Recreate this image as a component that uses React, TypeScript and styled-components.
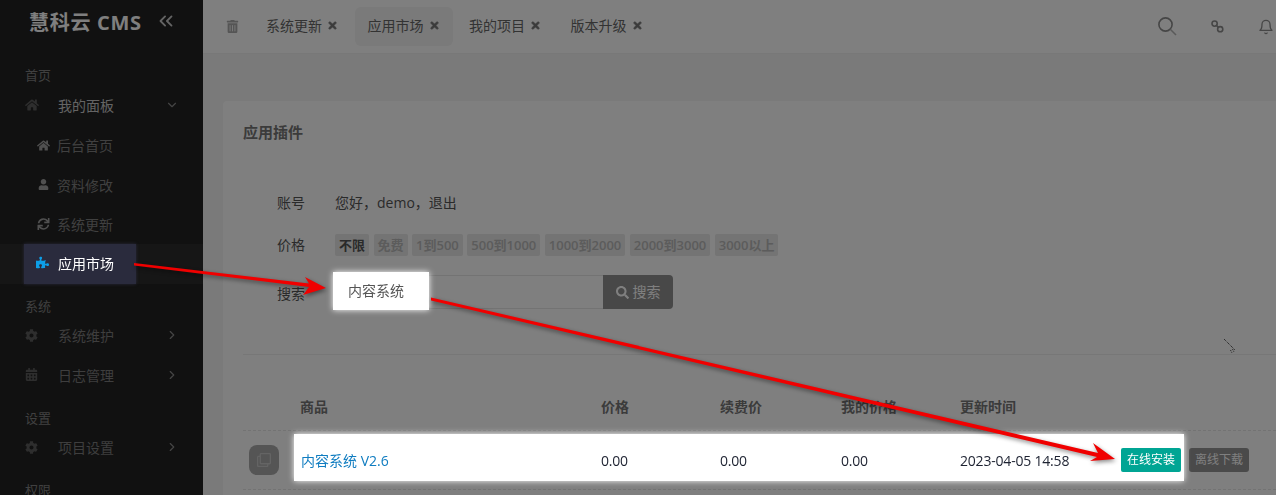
import React, { FC } from 'react';
import styled, { createGlobalStyle } from 'styled-components';
import { FaHome, FaUser, FaSync, FaPuzzlePiece, FaCog, FaCalendarAlt, FaTimes, FaTrashAlt, FaSearch, FaRegClone } from 'react-icons/fa';
import { FiChevronDown, FiChevronRight, FiChevronsLeft, FiBell } from 'react-icons/fi';

const tabs = [
  { name: '系统更新' },
  { name: '应用市场', active: true },
  { name: '我的项目' },
  { name: '版本升级' },
];

const prices = ['不限', '免费', '1到500', '500到1000', '1000到2000', '2000到3000', '3000以上'];

const App: FC = () => (
  <Page>
    <GlobalStyle />
    <Sidebar>
      <Logo>
        <LogoText>慧科云 CMS</LogoText>
        <FiChevronsLeft size={22} />
      </Logo>
      <GroupLabel $first>首页</GroupLabel>
      <MenuItem $open>
        <MenuIcon><FaHome size={14} /></MenuIcon>
        <span>我的面板</span>
        <Caret><FiChevronDown size={14} /></Caret>
      </MenuItem>
      <SubItem>
        <FaHome size={13} />
        <span>后台首页</span>
      </SubItem>
      <SubItem>
        <FaUser size={11} />
        <span>资料修改</span>
      </SubItem>
      <SubItem>
        <FaSync size={12} />
        <span>系统更新</span>
      </SubItem>
      <ActiveRow>
        <ActiveSpot>
          <FaPuzzlePiece size={13} color="#0d9fe8" />
          <span>应用市场</span>
        </ActiveSpot>
      </ActiveRow>
      <GroupLabel>系统</GroupLabel>
      <MenuItem>
        <MenuIcon><FaCog size={13} /></MenuIcon>
        <span>系统维护</span>
        <Caret><FiChevronRight size={14} /></Caret>
      </MenuItem>
      <MenuItem>
        <MenuIcon><FaCalendarAlt size={13} /></MenuIcon>
        <span>日志管理</span>
        <Caret><FiChevronRight size={14} /></Caret>
      </MenuItem>
      <GroupLabel>设置</GroupLabel>
      <MenuItem>
        <MenuIcon><FaCog size={13} /></MenuIcon>
        <span>项目设置</span>
        <Caret><FiChevronRight size={14} /></Caret>
      </MenuItem>
      <GroupLabel>权限</GroupLabel>
    </Sidebar>
    <Main>
      <Header>
        <Trash><FaTrashAlt size={13} /></Trash>
        <Tabs>
          {tabs.map((tab) => (
            <Tab key={tab.name} $active={tab.active}>
              {tab.name}
              <FaTimes size={11} />
            </Tab>
          ))}
        </Tabs>
        <Tools>
          <svg width="19" height="19" viewBox="0 0 19 19" fill="none" strokeWidth="1.6">
            <circle cx="7.5" cy="7.5" r="6.6" stroke="#8c8c8c" />
            <path d="M12.5 12.5l5.5 5.5" stroke="#b4b4b4" />
          </svg>
          <svg width="13" height="13" viewBox="0 0 13 13" fill="none" stroke="#8c8c8c" strokeWidth="1.6">
            <circle cx="3.6" cy="3.6" r="2.6" />
            <circle cx="9.2" cy="9.2" r="2.6" />
            <path d="M5.4 5.4l2 2" />
          </svg>
          <FiBell size={16} color="#8c8c8c" />
        </Tools>
      </Header>
      <Content>
        <Card>
          <CardTitle>应用插件</CardTitle>
          <FormRow $top={51}>
            <FormLabel>账号</FormLabel>
            <span>您好，demo，退出</span>
          </FormRow>
          <FormRow $top={21}>
            <FormLabel>价格</FormLabel>
            <Chips>
              {prices.map((price, i) => (
                <Chip key={price} $active={i === 0}>{price}</Chip>
              ))}
            </Chips>
          </FormRow>
          <FormRow $top={19}>
            <SearchLabel>搜索</SearchLabel>
            <SearchGroup>
              <InputSpot>内容系统</InputSpot>
              <InputRest />
              <SearchButton>
                <FaSearch size={13} />
                搜索
              </SearchButton>
            </SearchGroup>
          </FormRow>
          <Divider />
          <TableHead>
            <HeadCell>商品</HeadCell>
            <HeadCell>价格</HeadCell>
            <HeadCell>续费价</HeadCell>
            <HeadCell>我的价格</HeadCell>
            <HeadCell>更新时间</HeadCell>
          </TableHead>
          <TableRow>
            <Tile><FaRegClone size={14} /></Tile>
            <RowSpot>
              <ProductLink>内容系统 V2.6</ProductLink>
              <NumberCell>0.00</NumberCell>
              <NumberCell>0.00</NumberCell>
              <NumberCell>0.00</NumberCell>
              <NumberCell>2023-04-05 14:58</NumberCell>
              <InstallButton>在线安装</InstallButton>
            </RowSpot>
            <OfflineButton>离线下载</OfflineButton>
          </TableRow>
        </Card>
      </Content>
    </Main>
    <Dim />
    <Arrows viewBox="0 0 1276 495">
      <polygon points="134,263 134,265.5 309,287 303,295 326,288 305,277 309,283.5" fill="#f00000" />
      <polygon points="431,297.5 431,300.5 1097,457 1090,461 1115,459 1093,443 1098,453" fill="#f00000" />
    </Arrows>
    <Cursor viewBox="0 0 16 16">
      <path d="M1 1l11 11" stroke="#111" strokeWidth="1" strokeDasharray="1 1" />
      <path d="M7.5 12l1.5 3M9.5 11l1.5 3" stroke="#222" strokeWidth="1" strokeDasharray="1 1" />
    </Cursor>
  </Page>
);

const GlobalStyle = createGlobalStyle`
  html, body {
    margin: 0;
    height: 100%;
    overflow: hidden;
  }
  body {
    font-family: "Open Sans", "Noto Sans CJK SC", sans-serif;
    font-size: 14px;
    color: #555555;
  }
`;

const Page = styled.div`
  display: flex;
  width: 1276px;
  height: 495px;
  overflow: hidden;
`;

const Dim = styled.div`
  position: fixed;
  inset: 0;
  z-index: 10;
  background: rgba(0, 0, 0, 0.5);
`;

const Arrows = styled.svg`
  position: fixed;
  left: 0;
  top: 0;
  width: 1276px;
  height: 495px;
  z-index: 20;
  filter: drop-shadow(1px 2px 2px rgba(0, 0, 0, 0.45));
`;

const Cursor = styled.svg`
  position: fixed;
  left: 1223px;
  top: 338px;
  width: 16px;
  height: 16px;
  z-index: 21;
`;

const Sidebar = styled.aside`
  flex: 0 0 203px;
  height: 495px;
  overflow: hidden;
  background: #222222;
  color: #808080;
`;

const Logo = styled.div`
  display: flex;
  align-items: center;
  justify-content: space-between;
  height: 44px;
  padding: 0 26px 2px 29px;
  box-sizing: border-box;
  color: #c8c8c8;
`;

const LogoText = styled.div`
  font-size: 20px;
  font-weight: 700;
  letter-spacing: 0.7px;
  white-space: nowrap;
  color: #ffffff;
`;

const GroupLabel = styled.div<{ $first?: boolean }>`
  height: 20px;
  line-height: 18px;
  margin-top: ${(p) => (p.$first ? '22px' : '13px')};
  padding-left: 25px;
  font-size: 13px;
  color: #808080;
`;

const MenuItem = styled.div<{ $open?: boolean }>`
  display: flex;
  align-items: center;
  height: 39.5px;
  padding: 0 24px 2px 25px;
  box-sizing: border-box;
  color: ${(p) => (p.$open ? '#c8c8c8' : '#7c7c7c')};
  svg {
    color: #5c5c5c;
  }
`;

const MenuIcon = styled.span`
  display: flex;
  flex: 0 0 33px;
`;

const Caret = styled.span`
  display: flex;
  margin-left: auto;
  svg {
    color: #8a8a8a;
  }
`;

const SubItem = styled.div`
  display: flex;
  align-items: center;
  height: 39.5px;
  padding-left: 37px;
  box-sizing: border-box;
  color: #808080;
  svg {
    flex: 0 0 13px;
    margin-right: 7px;
    color: #a0a0a0;
  }
`;

const ActiveRow = styled.div`
  height: 39.5px;
  padding-left: 24px;
  background: #2c2c2c;
`;

const ActiveSpot = styled.div`
  position: relative;
  z-index: 11;
  display: flex;
  align-items: center;
  gap: 9px;
  width: 112px;
  height: 39.5px;
  padding: 0 0 2px 12px;
  box-sizing: border-box;
  background: #2a2b3d;
  box-shadow: 0 0 3px #2a2b3d;
  color: #ffffff;
`;

const Main = styled.main`
  flex: 1;
  min-width: 0;
  background: #f4f4f4;
`;

const Header = styled.header`
  display: flex;
  align-items: center;
  height: 53px;
  padding-left: 23px;
  background: #ffffff;
  border-bottom: 1px solid #f0f0f0;
  color: #666666;
`;

const Trash = styled.span`
  display: flex;
  flex: 0 0 27px;
  color: #aaaaaa;
`;

const Tabs = styled.div`
  display: flex;
  align-items: center;
  gap: 3.5px;
`;

const Tab = styled.div<{ $active?: boolean }>`
  display: flex;
  align-items: center;
  gap: 5px;
  height: 39px;
  padding: 0 13px 3px;
  box-sizing: border-box;
  border-radius: 6px;
  background: ${(p) => (p.$active ? '#f4f4f4' : 'transparent')};
  svg {
    color: #777777;
    stroke: #777777;
    stroke-width: 30;
  }
`;

const Tools = styled.div`
  display: flex;
  align-items: center;
  gap: 34px;
  margin-left: auto;
  margin-right: 2px;
`;

const Content = styled.div`
  padding: 47px 0 0 20px;
`;

const Card = styled.section`
  height: 420px;
  padding: 21px 0 0 20px;
  border-radius: 4px 0 0 0;
  background: #ffffff;
`;

const CardTitle = styled.h2`
  margin: 0;
  font-size: 15px;
  line-height: 20px;
  font-weight: 700;
  color: #777777;
`;

const FormRow = styled.div<{ $top: number }>`
  display: flex;
  align-items: center;
  margin-top: ${(p) => p.$top}px;
  padding-left: 34px;
  line-height: 20px;
`;

const FormLabel = styled.span`
  flex: 0 0 58px;
`;

const SearchLabel = styled(FormLabel)`
  padding-top: 4px;
`;

const Chips = styled.div`
  display: flex;
  gap: 4.5px;
`;

const Chip = styled.span<{ $active?: boolean }>`
  height: 22px;
  line-height: 22px;
  padding: 0 4px;
  border-radius: 2px;
  background: #e8e8e8;
  font-weight: 600;
  font-size: 13px;
  color: ${(p) => (p.$active ? '#555555' : '#b8b8b8')};
`;

const SearchGroup = styled.div`
  display: flex;
  width: 338px;
  height: 34px;
`;

const InputSpot = styled.div`
  position: relative;
  z-index: 11;
  width: 96px;
  height: 38px;
  margin: -3px 0 -1px -2px;
  padding-left: 15px;
  box-sizing: border-box;
  line-height: 38px;
  background: #ffffff;
  box-shadow: 0 0 6px #ffffff;
  color: #555555;
`;

const InputRest = styled.div`
  flex: 1;
  border: 1px solid #e6e6e6;
  border-left: 0;
  border-right: 0;
`;

const SearchButton = styled.div`
  display: flex;
  align-items: center;
  justify-content: center;
  gap: 4px;
  width: 70px;
  border-radius: 0 4px 4px 0;
  background: #909090;
  color: #ffffff;
`;

const Divider = styled.div`
  height: 1px;
  margin-top: 45px;
  background: #efefef;
`;

const columns = '301px 119px 121px 119px 161px';

const TableHead = styled.div`
  display: grid;
  grid-template-columns: ${columns};
  align-items: center;
  height: 76px;
  padding: 27px 0 0 57px;
  border-bottom: 1px dashed #e6e6e6;
  box-sizing: border-box;
`;

const HeadCell = styled.span`
  font-weight: 700;
  color: #777777;
`;

const TableRow = styled.div`
  display: flex;
  align-items: flex-start;
  height: 59px;
  padding: 3px 0 0 6px;
  box-sizing: border-box;
  border-bottom: 1px dashed #e6e6e6;
`;

const Tile = styled.div`
  display: flex;
  align-items: center;
  justify-content: center;
  width: 30px;
  height: 30px;
  margin-top: 11px;
  border-radius: 8px;
  background: #aaaaaa;
  color: #c8c8c8;
`;

const RowSpot = styled.div`
  position: relative;
  z-index: 11;
  display: grid;
  grid-template-columns: 300px 119px 121px 119px 161px 60px;
  align-items: center;
  height: 47px;
  margin-left: 15px;
  padding: 5px 3px 0 7px;
  box-sizing: border-box;
  background: #ffffff;
  box-shadow: 0 0 6px #ffffff;
  color: #1d2231;
`;

const ProductLink = styled.a`
  color: #0f7cc0;
`;

const NumberCell = styled.span`
  letter-spacing: -0.2px;
`;

const InstallButton = styled.span`
  height: 24px;
  line-height: 24px;
  border-radius: 2px;
  background: #00a594;
  font-size: 12px;
  text-align: center;
  color: #ffffff;
`;

const OfflineButton = styled.span`
  width: 60px;
  height: 24px;
  margin: 14px 0 0 5px;
  line-height: 24px;
  border-radius: 3px;
  background: #949494;
  font-size: 12px;
  text-align: center;
  color: #ffffff;
`;

export default App;
